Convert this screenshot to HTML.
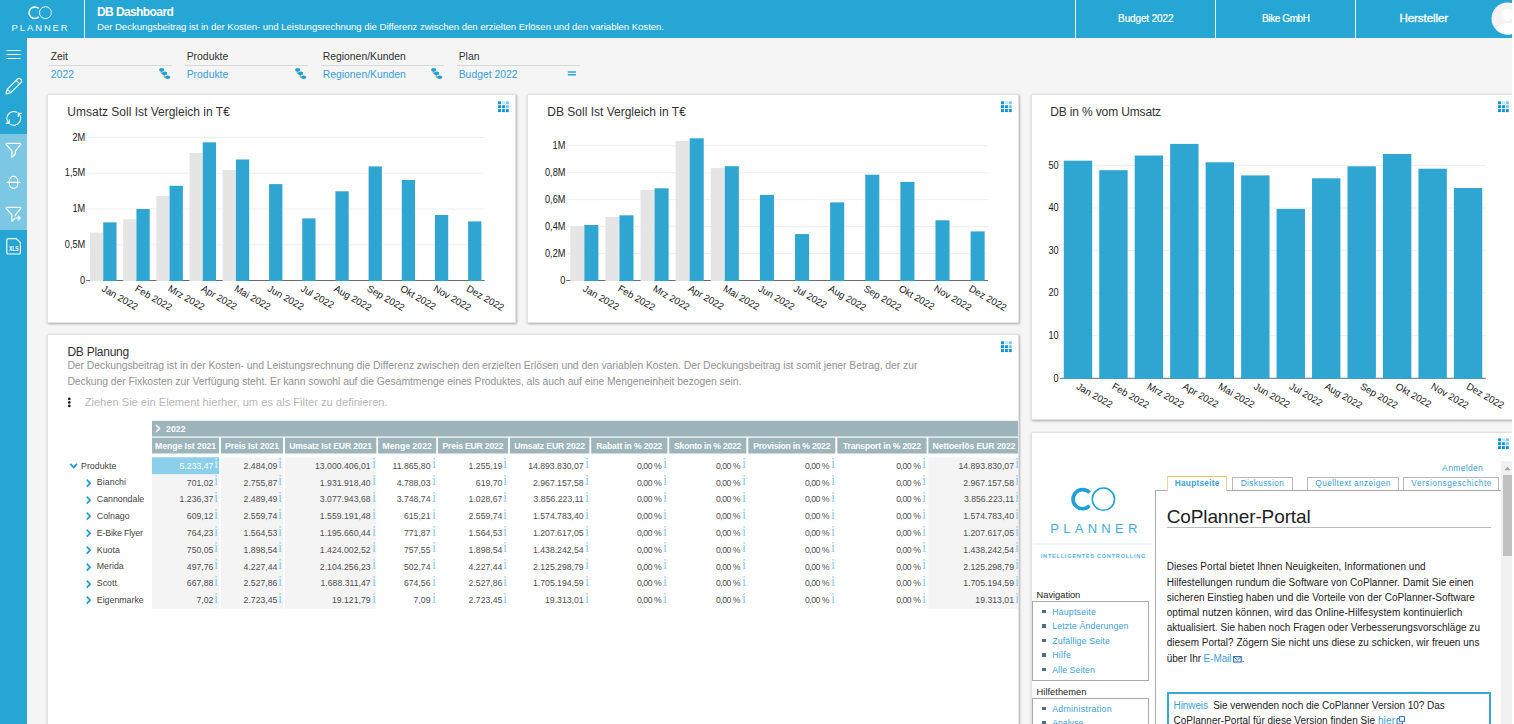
<!DOCTYPE html>
<html lang="de"><head><meta charset="utf-8"><title>DB Dashboard</title>
<style>
html,body{margin:0;padding:0;}
body{width:1514px;height:724px;overflow:hidden;background:#fff;position:relative;font-family:"Liberation Sans",sans-serif;color:#333;}
#app{position:absolute;left:0;top:0;width:1512px;height:724px;background:#f5f5f5;overflow:hidden;}
.abs{position:absolute;}
#hdr{position:absolute;left:0;top:0;width:1512px;height:38px;background:#25a6d4;color:#fff;}
#side{position:absolute;left:0;top:38px;width:27px;height:686px;background:#25a6d4;}
#side .lite{position:absolute;left:0;top:96px;width:27px;height:96px;background:#7cc8e4;}
.vdiv{position:absolute;top:0;width:1px;height:38px;background:#fff;opacity:.9;}
.hcell{position:absolute;top:0;height:38px;line-height:37px;text-align:center;font-size:10px;color:#fff;white-space:nowrap;}
.card{position:absolute;background:#fff;border:1px solid #e2e2e2;box-shadow:1px 1px 2px rgba(0,0,0,.22),0 1px 3px rgba(0,0,0,.10);box-sizing:border-box;}
.t{position:absolute;white-space:nowrap;line-height:1;}
.flab{font-size:10.5px;color:#333;}
.fval{font-size:10.5px;color:#3aa0d8;}
.fline{position:absolute;height:1px;background:#d9d9d9;}
svg{position:absolute;overflow:visible;}
svg text{font-family:"Liberation Sans",sans-serif;}
</style></head>
<body>
<div id="app">
<div id="hdr">
<svg style="left:0;top:0" width="84" height="38" viewBox="0 0 84 38"><path d="M38.7 8.4 A5.75 5.75 0 1 0 38.7 16.9" fill="none" stroke="#fff" stroke-width="1.5"/><circle cx="45.4" cy="12.65" r="5.95" fill="none" stroke="#fff" stroke-width="0.9"/></svg>
<div class="t " style="left:11.60px;top:23.04px;font-size:9.4px;line-height:9.4px;color:#fff;letter-spacing:1.951px;">PLANNER</div>
<div class="vdiv" style="left:84px"></div>
<div class="t " style="left:97.00px;top:6.14px;font-size:12px;line-height:12px;color:#fff;font-weight:bold;letter-spacing:-0.595px;">DB Dashboard</div>
<div class="t " style="left:97.00px;top:22.07px;font-size:9.6px;line-height:9.6px;color:#fff;letter-spacing:-0.043px;">Der Deckungsbeitrag ist in der Kosten- und Leistungsrechnung die Differenz zwischen den erzielten Erlösen und den variablen Kosten.</div>
<div class="vdiv" style="left:1075px"></div>
<div class="vdiv" style="left:1215px"></div>
<div class="vdiv" style="left:1355px"></div>
<div class="t " style="left:1118.10px;top:13.73px;font-size:10px;line-height:10px;color:#fff;letter-spacing:-0.132px;-webkit-text-stroke:0.2px #fff;">Budget 2022</div>
<div class="t " style="left:1262.05px;top:13.73px;font-size:10px;line-height:10px;color:#fff;letter-spacing:-0.403px;-webkit-text-stroke:0.2px #fff;">Bike GmbH</div>
<div class="t " style="left:1399.40px;top:12.97px;font-size:11.5px;line-height:11.5px;color:#fff;letter-spacing:-0.047px;-webkit-text-stroke:0.35px #fff;">Hersteller</div>
<svg style="left:1491px;top:2px" width="33" height="33" viewBox="0 0 33 33"><defs><clipPath id="avc"><circle cx="16.5" cy="16.5" r="16"/></clipPath></defs><circle cx="16.5" cy="16.5" r="16" fill="#f3f3f5"/><g clip-path="url(#avc)" fill="#fff"><circle cx="16.5" cy="13" r="6"/><ellipse cx="16.5" cy="30" rx="11.5" ry="9"/></g></svg>
</div>
<div id="side"><div class="lite"></div>
<svg style="left:0;top:0" width="27" height="240" viewBox="0 38 27 240" fill="none" stroke="#fff" stroke-width="1.15" stroke-linecap="round" stroke-linejoin="round"><path d="M6.5 50.5H20.5M6.5 54.5H20.5M6.5 58.5H20.5" stroke-linecap="butt"/><path d="M6 94L7.3 89.2L17.6 78.9a1.9 1.9 0 0 1 2.7 0l0.8 0.8a1.9 1.9 0 0 1 0 2.7L10.8 92.7Z M7.3 89.2L10.8 92.7 M16.2 80.3L19.7 83.8"/><path d="M8.75 123.1A6.9 6.9 0 0 1 16.8 112.2 M18.6 113.4A6.9 6.9 0 0 1 10.7 124.5"/><path d="M5.8 123.1H9.3V119.6 M21.6 113.4H18.3V116.9" stroke-linecap="butt" stroke-linejoin="miter"/><path d="M7 143.3H20a0.8 0.8 0 0 1 0.6 1.3L15.4 150.8V153.8L11.9 157.3V150.8L6.4 144.6a0.8 0.8 0 0 1 0.6 -1.3Z"/><rect x="9.4" y="176.4" width="8.3" height="12" rx="4.15"/><path d="M7.2 182.4H20"/><path d="M15.4 216V214.8L20.6 208.6a0.8 0.8 0 0 0 -0.6 -1.3H7a0.8 0.8 0 0 0 -0.6 1.3L11.9 214.8V221.3L14.9 218.3"/><path d="M15.8 218H19"/><path d="M18.5 215.9L20.9 218L18.5 220.1Z" fill="#fff" stroke-width="0.6"/><path d="M8.4 238.6H16.3L20.4 242.6V252.4a1.6 1.6 0 0 1 -1.6 1.6H8.4a1.6 1.6 0 0 1 -1.6 -1.6V240.2a1.6 1.6 0 0 1 1.6 -1.6Z"/><text x="13.7" y="251.4" font-size="6.4" font-weight="bold" fill="#fff" stroke="none" text-anchor="middle" textLength="9.6" lengthAdjust="spacingAndGlyphs">XLS</text></svg>
</div>
<div class="t " style="left:50.70px;top:52.00px;font-size:10.4px;line-height:10.4px;color:#333;letter-spacing:-0.043px;">Zeit</div>
<div class="fline" style="left:48.5px;top:65px;width:123.5px"></div>
<div class="t " style="left:50.70px;top:70.00px;font-size:10.4px;line-height:10.4px;color:#3aa0d8;letter-spacing:0.092px;">2022</div>
<svg style="left:158.5px;top:68.0px" width="12" height="12" viewBox="0 0 12 12"><path d="M2.2 2.5V5.5H4.5M5.2 6V9.3H7.5" stroke="#8a8a8a" stroke-width="0.9" fill="none"/><ellipse cx="2.7" cy="1.9" rx="2.6" ry="1.8" fill="#1d9fd8"/><ellipse cx="5.6" cy="5.4" rx="2.6" ry="1.8" fill="#1d9fd8"/><ellipse cx="8.7" cy="9.2" rx="2.6" ry="1.8" fill="#1d9fd8"/></svg>
<div class="t " style="left:186.70px;top:52.00px;font-size:10.4px;line-height:10.4px;color:#333;">Produkte</div>
<div class="fline" style="left:184.5px;top:65px;width:123.5px"></div>
<div class="t " style="left:186.70px;top:70.00px;font-size:10.4px;line-height:10.4px;color:#3aa0d8;">Produkte</div>
<svg style="left:294.5px;top:68.0px" width="12" height="12" viewBox="0 0 12 12"><path d="M2.2 2.5V5.5H4.5M5.2 6V9.3H7.5" stroke="#8a8a8a" stroke-width="0.9" fill="none"/><ellipse cx="2.7" cy="1.9" rx="2.6" ry="1.8" fill="#1d9fd8"/><ellipse cx="5.6" cy="5.4" rx="2.6" ry="1.8" fill="#1d9fd8"/><ellipse cx="8.7" cy="9.2" rx="2.6" ry="1.8" fill="#1d9fd8"/></svg>
<div class="t " style="left:322.70px;top:52.00px;font-size:10.4px;line-height:10.4px;color:#333;">Regionen/Kunden</div>
<div class="fline" style="left:320.5px;top:65px;width:123.5px"></div>
<div class="t " style="left:322.70px;top:70.00px;font-size:10.4px;line-height:10.4px;color:#3aa0d8;">Regionen/Kunden</div>
<svg style="left:430.5px;top:68.0px" width="12" height="12" viewBox="0 0 12 12"><path d="M2.2 2.5V5.5H4.5M5.2 6V9.3H7.5" stroke="#8a8a8a" stroke-width="0.9" fill="none"/><ellipse cx="2.7" cy="1.9" rx="2.6" ry="1.8" fill="#1d9fd8"/><ellipse cx="5.6" cy="5.4" rx="2.6" ry="1.8" fill="#1d9fd8"/><ellipse cx="8.7" cy="9.2" rx="2.6" ry="1.8" fill="#1d9fd8"/></svg>
<div class="t " style="left:458.70px;top:52.00px;font-size:10.4px;line-height:10.4px;color:#333;">Plan</div>
<div class="fline" style="left:456.5px;top:65px;width:123.5px"></div>
<div class="t " style="left:458.70px;top:70.00px;font-size:10.4px;line-height:10.4px;color:#3aa0d8;">Budget 2022</div>
<svg style="left:567px;top:70px" width="10" height="7" viewBox="0 0 10 7"><path d="M0.8 1.95H8.9M0.8 4.75H8.9" stroke="#2fa3d8" stroke-width="1.5" fill="none"/></svg>
<div class="card" style="left:47px;top:94px;width:468.8px;height:228.8px"></div>
<div class="t " style="left:67.30px;top:106.14px;font-size:12px;line-height:12px;color:#333;">Umsatz Soll Ist Vergleich in T€</div>
<svg style="left:0;top:0" width="1512" height="724" viewBox="0 0 1512 724"><path d="M86.68 137.50H484.68" stroke="#efefef" stroke-width="1"/><path d="M86.68 173.25H484.68" stroke="#efefef" stroke-width="1"/><path d="M86.68 209.00H484.68" stroke="#efefef" stroke-width="1"/><path d="M86.68 244.75H484.68" stroke="#efefef" stroke-width="1"/><path d="M86.18 280.50H484.68" stroke="#6b6b6b" stroke-width="1"/><rect x="90.00" y="232.60" width="13.27" height="48.40" fill="#e5e5e5"/><rect x="103.26" y="222.40" width="13.27" height="58.60" fill="#2fa6d1"/><rect x="123.16" y="219.20" width="13.27" height="61.80" fill="#e5e5e5"/><rect x="136.43" y="209.00" width="13.27" height="72.00" fill="#2fa6d1"/><rect x="156.33" y="196.10" width="13.27" height="84.90" fill="#e5e5e5"/><rect x="169.60" y="185.80" width="13.27" height="95.20" fill="#2fa6d1"/><rect x="189.50" y="153.00" width="13.27" height="128.00" fill="#e5e5e5"/><rect x="202.76" y="142.30" width="13.27" height="138.70" fill="#2fa6d1"/><rect x="222.66" y="170.00" width="13.27" height="111.00" fill="#e5e5e5"/><rect x="235.93" y="159.50" width="13.27" height="121.50" fill="#2fa6d1"/><rect x="269.10" y="184.10" width="13.27" height="96.90" fill="#2fa6d1"/><rect x="302.27" y="218.40" width="13.27" height="62.60" fill="#2fa6d1"/><rect x="335.43" y="191.30" width="13.27" height="89.70" fill="#2fa6d1"/><rect x="368.60" y="166.40" width="13.27" height="114.60" fill="#2fa6d1"/><rect x="401.77" y="180.00" width="13.27" height="101.00" fill="#2fa6d1"/><rect x="434.93" y="215.00" width="13.27" height="66.00" fill="#2fa6d1"/><rect x="468.10" y="221.40" width="13.27" height="59.60" fill="#2fa6d1"/><text transform="translate(85.20 140.70) scale(1 1.17)" font-size="9.2" fill="#1c1c1c" text-anchor="end">2M</text><text transform="translate(85.20 176.45) scale(1 1.17)" font-size="9.2" fill="#1c1c1c" text-anchor="end">1,5M</text><text transform="translate(85.20 212.20) scale(1 1.17)" font-size="9.2" fill="#1c1c1c" text-anchor="end">1M</text><text transform="translate(85.20 247.95) scale(1 1.17)" font-size="9.2" fill="#1c1c1c" text-anchor="end">0,5M</text><text transform="translate(85.20 283.70) scale(1 1.17)" font-size="9.2" fill="#1c1c1c" text-anchor="end">0</text><text transform="translate(100.96 290.50) rotate(30)" font-size="9.7" fill="#1c1c1c">Jan 2022</text><text transform="translate(134.13 290.50) rotate(30)" font-size="9.7" fill="#1c1c1c">Feb 2022</text><text transform="translate(167.30 290.50) rotate(30)" font-size="9.7" fill="#1c1c1c">Mrz 2022</text><text transform="translate(200.46 290.50) rotate(30)" font-size="9.7" fill="#1c1c1c">Apr 2022</text><text transform="translate(233.63 290.50) rotate(30)" font-size="9.7" fill="#1c1c1c">Mai 2022</text><text transform="translate(266.80 290.50) rotate(30)" font-size="9.7" fill="#1c1c1c">Jun 2022</text><text transform="translate(299.97 290.50) rotate(30)" font-size="9.7" fill="#1c1c1c">Jul 2022</text><text transform="translate(333.13 290.50) rotate(30)" font-size="9.7" fill="#1c1c1c">Aug 2022</text><text transform="translate(366.30 290.50) rotate(30)" font-size="9.7" fill="#1c1c1c">Sep 2022</text><text transform="translate(399.47 290.50) rotate(30)" font-size="9.7" fill="#1c1c1c">Okt 2022</text><text transform="translate(432.63 290.50) rotate(30)" font-size="9.7" fill="#1c1c1c">Nov 2022</text><text transform="translate(465.80 290.50) rotate(30)" font-size="9.7" fill="#1c1c1c">Dez 2022</text></svg>
<div class="card" style="left:527px;top:94px;width:491.5px;height:228.8px"></div>
<div class="t " style="left:547.30px;top:106.14px;font-size:12px;line-height:12px;color:#333;">DB Soll Ist Vergleich in T€</div>
<svg style="left:0;top:0" width="1512" height="724" viewBox="0 0 1512 724"><path d="M566.79 145.75H988.16" stroke="#efefef" stroke-width="1"/><path d="M566.79 172.70H988.16" stroke="#efefef" stroke-width="1"/><path d="M566.79 199.65H988.16" stroke="#efefef" stroke-width="1"/><path d="M566.79 226.60H988.16" stroke="#efefef" stroke-width="1"/><path d="M566.79 253.55H988.16" stroke="#efefef" stroke-width="1"/><path d="M566.29 280.50H988.16" stroke="#6b6b6b" stroke-width="1"/><rect x="570.30" y="226.40" width="14.05" height="54.60" fill="#e5e5e5"/><rect x="584.35" y="225.00" width="14.05" height="56.00" fill="#2fa6d1"/><rect x="605.42" y="217.00" width="14.05" height="64.00" fill="#e5e5e5"/><rect x="619.46" y="215.30" width="14.05" height="65.70" fill="#2fa6d1"/><rect x="640.53" y="189.90" width="14.05" height="91.10" fill="#e5e5e5"/><rect x="654.57" y="188.30" width="14.05" height="92.70" fill="#2fa6d1"/><rect x="675.64" y="141.00" width="14.05" height="140.00" fill="#e5e5e5"/><rect x="689.69" y="138.30" width="14.05" height="142.70" fill="#2fa6d1"/><rect x="710.76" y="168.10" width="14.05" height="112.90" fill="#e5e5e5"/><rect x="724.80" y="166.20" width="14.05" height="114.80" fill="#2fa6d1"/><rect x="759.92" y="194.90" width="14.05" height="86.10" fill="#2fa6d1"/><rect x="795.03" y="234.10" width="14.05" height="46.90" fill="#2fa6d1"/><rect x="830.14" y="202.40" width="14.05" height="78.60" fill="#2fa6d1"/><rect x="865.26" y="174.70" width="14.05" height="106.30" fill="#2fa6d1"/><rect x="900.37" y="181.90" width="14.05" height="99.10" fill="#2fa6d1"/><rect x="935.49" y="220.30" width="14.05" height="60.70" fill="#2fa6d1"/><rect x="970.60" y="231.40" width="14.05" height="49.60" fill="#2fa6d1"/><text transform="translate(565.40 148.95) scale(1 1.17)" font-size="9.2" fill="#1c1c1c" text-anchor="end">1M</text><text transform="translate(565.40 175.90) scale(1 1.17)" font-size="9.2" fill="#1c1c1c" text-anchor="end">0,8M</text><text transform="translate(565.40 202.85) scale(1 1.17)" font-size="9.2" fill="#1c1c1c" text-anchor="end">0,6M</text><text transform="translate(565.40 229.80) scale(1 1.17)" font-size="9.2" fill="#1c1c1c" text-anchor="end">0,4M</text><text transform="translate(565.40 256.75) scale(1 1.17)" font-size="9.2" fill="#1c1c1c" text-anchor="end">0,2M</text><text transform="translate(565.40 283.70) scale(1 1.17)" font-size="9.2" fill="#1c1c1c" text-anchor="end">0</text><text transform="translate(582.05 290.50) rotate(30)" font-size="9.7" fill="#1c1c1c">Jan 2022</text><text transform="translate(617.16 290.50) rotate(30)" font-size="9.7" fill="#1c1c1c">Feb 2022</text><text transform="translate(652.27 290.50) rotate(30)" font-size="9.7" fill="#1c1c1c">Mrz 2022</text><text transform="translate(687.39 290.50) rotate(30)" font-size="9.7" fill="#1c1c1c">Apr 2022</text><text transform="translate(722.50 290.50) rotate(30)" font-size="9.7" fill="#1c1c1c">Mai 2022</text><text transform="translate(757.62 290.50) rotate(30)" font-size="9.7" fill="#1c1c1c">Jun 2022</text><text transform="translate(792.73 290.50) rotate(30)" font-size="9.7" fill="#1c1c1c">Jul 2022</text><text transform="translate(827.85 290.50) rotate(30)" font-size="9.7" fill="#1c1c1c">Aug 2022</text><text transform="translate(862.96 290.50) rotate(30)" font-size="9.7" fill="#1c1c1c">Sep 2022</text><text transform="translate(898.07 290.50) rotate(30)" font-size="9.7" fill="#1c1c1c">Okt 2022</text><text transform="translate(933.19 290.50) rotate(30)" font-size="9.7" fill="#1c1c1c">Nov 2022</text><text transform="translate(968.30 290.50) rotate(30)" font-size="9.7" fill="#1c1c1c">Dez 2022</text></svg>
<div class="card" style="left:1031px;top:94px;width:500px;height:325.8px"></div>
<div class="t " style="left:1050.30px;top:106.14px;font-size:12px;line-height:12px;color:#333;letter-spacing:-0.151px;">DB in % vom Umsatz</div>
<svg style="left:0;top:0" width="1512" height="724" viewBox="0 0 1512 724"><path d="M1060.25 165.40H1485.82" stroke="#efefef" stroke-width="1"/><path d="M1060.25 208.00H1485.82" stroke="#efefef" stroke-width="1"/><path d="M1060.25 250.60H1485.82" stroke="#efefef" stroke-width="1"/><path d="M1060.25 293.10H1485.82" stroke="#efefef" stroke-width="1"/><path d="M1060.25 335.70H1485.82" stroke="#efefef" stroke-width="1"/><path d="M1059.75 378.30H1485.82" stroke="#6b6b6b" stroke-width="1"/><rect x="1063.80" y="160.70" width="28.37" height="218.10" fill="#2fa6d1"/><rect x="1099.26" y="170.20" width="28.37" height="208.60" fill="#2fa6d1"/><rect x="1134.72" y="155.50" width="28.37" height="223.30" fill="#2fa6d1"/><rect x="1170.19" y="143.90" width="28.37" height="234.90" fill="#2fa6d1"/><rect x="1205.65" y="162.30" width="28.37" height="216.50" fill="#2fa6d1"/><rect x="1241.12" y="175.40" width="28.37" height="203.40" fill="#2fa6d1"/><rect x="1276.58" y="208.90" width="28.37" height="169.90" fill="#2fa6d1"/><rect x="1312.04" y="178.30" width="28.37" height="200.50" fill="#2fa6d1"/><rect x="1347.51" y="166.30" width="28.37" height="212.50" fill="#2fa6d1"/><rect x="1382.97" y="154.00" width="28.37" height="224.80" fill="#2fa6d1"/><rect x="1418.44" y="168.70" width="28.37" height="210.10" fill="#2fa6d1"/><rect x="1453.90" y="188.00" width="28.37" height="190.80" fill="#2fa6d1"/><text transform="translate(1058.60 168.60) scale(1 1.17)" font-size="9.2" fill="#1c1c1c" text-anchor="end">50</text><text transform="translate(1058.60 211.20) scale(1 1.17)" font-size="9.2" fill="#1c1c1c" text-anchor="end">40</text><text transform="translate(1058.60 253.80) scale(1 1.17)" font-size="9.2" fill="#1c1c1c" text-anchor="end">30</text><text transform="translate(1058.60 296.30) scale(1 1.17)" font-size="9.2" fill="#1c1c1c" text-anchor="end">20</text><text transform="translate(1058.60 338.90) scale(1 1.17)" font-size="9.2" fill="#1c1c1c" text-anchor="end">10</text><text transform="translate(1058.60 381.50) scale(1 1.17)" font-size="9.2" fill="#1c1c1c" text-anchor="end">0</text><text transform="translate(1075.68 388.30) rotate(30)" font-size="9.7" fill="#1c1c1c">Jan 2022</text><text transform="translate(1111.15 388.30) rotate(30)" font-size="9.7" fill="#1c1c1c">Feb 2022</text><text transform="translate(1146.61 388.30) rotate(30)" font-size="9.7" fill="#1c1c1c">Mrz 2022</text><text transform="translate(1182.07 388.30) rotate(30)" font-size="9.7" fill="#1c1c1c">Apr 2022</text><text transform="translate(1217.54 388.30) rotate(30)" font-size="9.7" fill="#1c1c1c">Mai 2022</text><text transform="translate(1253.00 388.30) rotate(30)" font-size="9.7" fill="#1c1c1c">Jun 2022</text><text transform="translate(1288.47 388.30) rotate(30)" font-size="9.7" fill="#1c1c1c">Jul 2022</text><text transform="translate(1323.93 388.30) rotate(30)" font-size="9.7" fill="#1c1c1c">Aug 2022</text><text transform="translate(1359.39 388.30) rotate(30)" font-size="9.7" fill="#1c1c1c">Sep 2022</text><text transform="translate(1394.86 388.30) rotate(30)" font-size="9.7" fill="#1c1c1c">Okt 2022</text><text transform="translate(1430.32 388.30) rotate(30)" font-size="9.7" fill="#1c1c1c">Nov 2022</text><text transform="translate(1465.79 388.30) rotate(30)" font-size="9.7" fill="#1c1c1c">Dez 2022</text></svg>
<svg style="left:497.7px;top:100.8px" width="12" height="12" viewBox="0 0 12 12"><rect x="0.0" y="0.3" width="3" height="3" fill="#1493d6"/><rect x="3.9" y="0.3" width="3" height="3" fill="#bfe3fa"/><rect x="7.8" y="0.3" width="3" height="3" fill="#7cc6f4"/><rect x="0.0" y="4.2" width="3" height="3" fill="#1493d6"/><rect x="3.9" y="4.2" width="3" height="3" fill="#1493d6"/><rect x="7.8" y="4.2" width="3" height="3" fill="#7cc6f4"/><rect x="0.0" y="8.1" width="3" height="3" fill="#1493d6"/><rect x="3.9" y="8.1" width="3" height="3" fill="#1493d6"/><rect x="7.8" y="8.1" width="3" height="3" fill="#1493d6"/></svg>
<svg style="left:1000.5px;top:100.8px" width="12" height="12" viewBox="0 0 12 12"><rect x="0.0" y="0.3" width="3" height="3" fill="#1493d6"/><rect x="3.9" y="0.3" width="3" height="3" fill="#bfe3fa"/><rect x="7.8" y="0.3" width="3" height="3" fill="#7cc6f4"/><rect x="0.0" y="4.2" width="3" height="3" fill="#1493d6"/><rect x="3.9" y="4.2" width="3" height="3" fill="#1493d6"/><rect x="7.8" y="4.2" width="3" height="3" fill="#7cc6f4"/><rect x="0.0" y="8.1" width="3" height="3" fill="#1493d6"/><rect x="3.9" y="8.1" width="3" height="3" fill="#1493d6"/><rect x="7.8" y="8.1" width="3" height="3" fill="#1493d6"/></svg>
<svg style="left:1497.5px;top:100.8px" width="12" height="12" viewBox="0 0 12 12"><rect x="0.0" y="0.3" width="3" height="3" fill="#1493d6"/><rect x="3.9" y="0.3" width="3" height="3" fill="#bfe3fa"/><rect x="7.8" y="0.3" width="3" height="3" fill="#7cc6f4"/><rect x="0.0" y="4.2" width="3" height="3" fill="#1493d6"/><rect x="3.9" y="4.2" width="3" height="3" fill="#1493d6"/><rect x="7.8" y="4.2" width="3" height="3" fill="#7cc6f4"/><rect x="0.0" y="8.1" width="3" height="3" fill="#1493d6"/><rect x="3.9" y="8.1" width="3" height="3" fill="#1493d6"/><rect x="7.8" y="8.1" width="3" height="3" fill="#1493d6"/></svg>
<div class="card" style="left:47px;top:334px;width:972px;height:420px"></div>
<svg style="left:1000.5px;top:340.5px" width="12" height="12" viewBox="0 0 12 12"><rect x="0.0" y="0.3" width="3" height="3" fill="#1493d6"/><rect x="3.9" y="0.3" width="3" height="3" fill="#bfe3fa"/><rect x="7.8" y="0.3" width="3" height="3" fill="#7cc6f4"/><rect x="0.0" y="4.2" width="3" height="3" fill="#1493d6"/><rect x="3.9" y="4.2" width="3" height="3" fill="#1493d6"/><rect x="7.8" y="4.2" width="3" height="3" fill="#7cc6f4"/><rect x="0.0" y="8.1" width="3" height="3" fill="#1493d6"/><rect x="3.9" y="8.1" width="3" height="3" fill="#1493d6"/><rect x="7.8" y="8.1" width="3" height="3" fill="#1493d6"/></svg>
<div class="abs" style="left:0;top:0;width:1018px;height:724px;overflow:hidden">
<div class="t " style="left:67.40px;top:346.14px;font-size:12px;line-height:12px;color:#333;letter-spacing:-0.250px;">DB Planung</div>
<div class="t " style="left:67.40px;top:361.40px;font-size:10.4px;line-height:10.4px;color:#939393;letter-spacing:-0.051px;">Der Deckungsbeitrag ist in der Kosten- und Leistungsrechnung die Differenz zwischen den erzielten Erlösen und den variablen Kosten. Der Deckungsbeitrag ist somit jener Betrag, der zur</div>
<div class="t " style="left:67.40px;top:377.20px;font-size:10.4px;line-height:10.4px;color:#939393;letter-spacing:-0.055px;">Deckung der Fixkosten zur Verfügung steht. Er kann sowohl auf die Gesamtmenge eines Produktes, als auch auf eine Mengeneinheit bezogen sein.</div>
<svg style="left:67px;top:397px" width="5" height="11" viewBox="0 0 5 11"><circle cx="2.3" cy="1.9" r="1.35" fill="#222"/><circle cx="2.3" cy="5.4" r="1.35" fill="#222"/><circle cx="2.3" cy="8.9" r="1.35" fill="#222"/></svg>
<div class="t " style="left:84.70px;top:397.32px;font-size:11.2px;line-height:11.2px;color:#b7b7b7;letter-spacing:-0.038px;">Ziehen Sie ein Element hierher, um es als Filter zu definieren.</div>
<svg style="left:0;top:0" width="1018" height="724" viewBox="0 0 1018 724"><rect x="152" y="420.8" width="868" height="15.7" fill="#9db4bb"/><rect x="152.0" y="437.7" width="67.1" height="15.8" fill="#9db4bb"/><rect x="220.9" y="437.7" width="62.2" height="15.8" fill="#9db4bb"/><rect x="284.9" y="437.7" width="91.4" height="15.8" fill="#9db4bb"/><rect x="378.1" y="437.7" width="58.1" height="15.8" fill="#9db4bb"/><rect x="437.9" y="437.7" width="70.2" height="15.8" fill="#9db4bb"/><rect x="509.9" y="437.7" width="79.5" height="15.8" fill="#9db4bb"/><rect x="591.2" y="437.7" width="76.2" height="15.8" fill="#9db4bb"/><rect x="669.2" y="437.7" width="77.1" height="15.8" fill="#9db4bb"/><rect x="748.3" y="437.7" width="87.0" height="15.8" fill="#9db4bb"/><rect x="837.3" y="437.7" width="89.3" height="15.8" fill="#9db4bb"/><rect x="928.4" y="437.7" width="91.3" height="15.8" fill="#9db4bb"/><rect x="152.0" y="457.5" width="67.1" height="151.2" fill="#f4f4f4"/><rect x="220.9" y="457.5" width="62.2" height="151.2" fill="#f4f4f4"/><rect x="284.9" y="457.5" width="91.4" height="151.2" fill="#f4f4f4"/><rect x="928.4" y="457.5" width="91.3" height="151.2" fill="#f4f4f4"/><rect x="152.0" y="457.3" width="67.1" height="16.8" fill="#8bd0ea"/></svg>
<svg style="left:154.5px;top:424.3px" width="6" height="9" viewBox="0 0 6 9"><path d="M1 1L4.6 4.5L1 8" fill="none" stroke="#fff" stroke-width="1.5"/></svg>
<div class="t " style="left:166.10px;top:425.24px;font-size:8.7px;line-height:8.7px;color:#fff;font-weight:bold;letter-spacing:0.024px;">2022</div>
<div class="t " style="left:155.05px;top:441.62px;font-size:8.6px;line-height:8.6px;color:#fff;font-weight:bold;letter-spacing:-0.011px;">Menge Ist 2021</div>
<div class="t " style="left:225.05px;top:441.62px;font-size:8.6px;line-height:8.6px;color:#fff;font-weight:bold;letter-spacing:-0.081px;">Preis Ist 2021</div>
<div class="t " style="left:289.20px;top:441.62px;font-size:8.6px;line-height:8.6px;color:#fff;font-weight:bold;letter-spacing:-0.124px;">Umsatz Ist EUR 2021</div>
<div class="t " style="left:382.55px;top:441.62px;font-size:8.6px;line-height:8.6px;color:#fff;font-weight:bold;letter-spacing:0.052px;">Menge 2022</div>
<div class="t " style="left:442.55px;top:441.62px;font-size:8.6px;line-height:8.6px;color:#fff;font-weight:bold;letter-spacing:-0.166px;">Preis EUR 2022</div>
<div class="t " style="left:514.15px;top:441.62px;font-size:8.6px;line-height:8.6px;color:#fff;font-weight:bold;letter-spacing:-0.115px;">Umsatz EUR 2022</div>
<div class="t " style="left:596.25px;top:441.62px;font-size:8.6px;line-height:8.6px;color:#fff;font-weight:bold;letter-spacing:-0.146px;">Rabatt in % 2022</div>
<div class="t " style="left:674.10px;top:441.62px;font-size:8.6px;line-height:8.6px;color:#fff;font-weight:bold;letter-spacing:-0.226px;">Skonto in % 2022</div>
<div class="t " style="left:753.15px;top:441.62px;font-size:8.6px;line-height:8.6px;color:#fff;font-weight:bold;letter-spacing:-0.190px;">Provision in % 2022</div>
<div class="t " style="left:842.90px;top:441.62px;font-size:8.6px;line-height:8.6px;color:#fff;font-weight:bold;letter-spacing:-0.172px;">Transport in % 2022</div>
<div class="t " style="left:932.60px;top:441.62px;font-size:8.6px;line-height:8.6px;color:#fff;font-weight:bold;letter-spacing:-0.091px;">Nettoerlös EUR 2022</div>
<svg style="left:70px;top:463.1px" width="8" height="6" viewBox="0 0 8 6"><path d="M0.4 0.9L3.7 4.4L7 0.9" fill="none" stroke="#1e9ed6" stroke-width="1.7"/></svg>
<div class="t " style="left:81.00px;top:461.65px;font-size:8.8px;line-height:8.8px;color:#444;letter-spacing:0.026px;">Produkte</div>
<div class="t " style="left:179.57px;top:461.74px;font-size:8.7px;line-height:8.7px;color:#fff;">5.233,47</div>
<div class="t" style="left:212.4px;top:458.4px;font-size:14px;line-height:12px;color:#dff1f9;font-family:'Liberation Serif',serif;width:8px;text-align:center;transform:scaleX(.8);-webkit-text-stroke:0.2px #dff1f9">i</div>
<div class="t " style="left:243.57px;top:461.74px;font-size:8.7px;line-height:8.7px;color:#505050;">2.484,09</div>
<div class="t" style="left:276.4px;top:458.4px;font-size:14px;line-height:12px;color:#84cbe9;font-family:'Liberation Serif',serif;width:8px;text-align:center;transform:scaleX(.8);-webkit-text-stroke:0.2px #84cbe9">i</div>
<div class="t " style="left:315.04px;top:461.74px;font-size:8.7px;line-height:8.7px;color:#505050;">13.000.406,01</div>
<div class="t" style="left:369.6px;top:458.4px;font-size:14px;line-height:12px;color:#84cbe9;font-family:'Liberation Serif',serif;width:8px;text-align:center;transform:scaleX(.8);-webkit-text-stroke:0.2px #84cbe9">i</div>
<div class="t " style="left:392.48px;top:461.74px;font-size:8.7px;line-height:8.7px;color:#505050;">11.865,80</div>
<div class="t" style="left:429.5px;top:458.4px;font-size:14px;line-height:12px;color:#84cbe9;font-family:'Liberation Serif',serif;width:8px;text-align:center;transform:scaleX(.8);-webkit-text-stroke:0.2px #84cbe9">i</div>
<div class="t " style="left:468.57px;top:461.74px;font-size:8.7px;line-height:8.7px;color:#505050;">1.255,19</div>
<div class="t" style="left:501.4px;top:458.4px;font-size:14px;line-height:12px;color:#84cbe9;font-family:'Liberation Serif',serif;width:8px;text-align:center;transform:scaleX(.8);-webkit-text-stroke:0.2px #84cbe9">i</div>
<div class="t " style="left:528.14px;top:461.74px;font-size:8.7px;line-height:8.7px;color:#505050;">14.893.830,07</div>
<div class="t" style="left:582.7px;top:458.4px;font-size:14px;line-height:12px;color:#84cbe9;font-family:'Liberation Serif',serif;width:8px;text-align:center;transform:scaleX(.8);-webkit-text-stroke:0.2px #84cbe9">i</div>
<div class="t " style="left:637.00px;top:461.74px;font-size:8.7px;line-height:8.7px;color:#505050;letter-spacing:-0.469px;">0,00 %</div>
<div class="t" style="left:660.7px;top:458.4px;font-size:14px;line-height:12px;color:#84cbe9;font-family:'Liberation Serif',serif;width:8px;text-align:center;transform:scaleX(.8);-webkit-text-stroke:0.2px #84cbe9">i</div>
<div class="t " style="left:715.90px;top:461.74px;font-size:8.7px;line-height:8.7px;color:#505050;letter-spacing:-0.469px;">0,00 %</div>
<div class="t" style="left:739.6px;top:458.4px;font-size:14px;line-height:12px;color:#84cbe9;font-family:'Liberation Serif',serif;width:8px;text-align:center;transform:scaleX(.8);-webkit-text-stroke:0.2px #84cbe9">i</div>
<div class="t " style="left:804.90px;top:461.74px;font-size:8.7px;line-height:8.7px;color:#505050;letter-spacing:-0.469px;">0,00 %</div>
<div class="t" style="left:828.6px;top:458.4px;font-size:14px;line-height:12px;color:#84cbe9;font-family:'Liberation Serif',serif;width:8px;text-align:center;transform:scaleX(.8);-webkit-text-stroke:0.2px #84cbe9">i</div>
<div class="t " style="left:896.20px;top:461.74px;font-size:8.7px;line-height:8.7px;color:#505050;letter-spacing:-0.469px;">0,00 %</div>
<div class="t" style="left:919.9px;top:458.4px;font-size:14px;line-height:12px;color:#84cbe9;font-family:'Liberation Serif',serif;width:8px;text-align:center;transform:scaleX(.8);-webkit-text-stroke:0.2px #84cbe9">i</div>
<div class="t " style="left:958.44px;top:461.74px;font-size:8.7px;line-height:8.7px;color:#505050;">14.893.830,07</div>
<div class="t" style="left:1013.0px;top:458.4px;font-size:14px;line-height:12px;color:#84cbe9;font-family:'Liberation Serif',serif;width:8px;text-align:center;transform:scaleX(.8);-webkit-text-stroke:0.2px #84cbe9">i</div>
<svg style="left:86px;top:478.7px" width="6" height="9" viewBox="0 0 6 9"><path d="M0.8 0.7L4.1 4.2L0.8 7.7" fill="none" stroke="#1e9ed6" stroke-width="1.7"/></svg>
<div class="t " style="left:96.80px;top:478.45px;font-size:8.8px;line-height:8.8px;color:#444;letter-spacing:0.057px;">Bianchi</div>
<div class="t " style="left:186.82px;top:478.54px;font-size:8.7px;line-height:8.7px;color:#505050;">701,02</div>
<div class="t" style="left:212.4px;top:475.2px;font-size:14px;line-height:12px;color:#84cbe9;font-family:'Liberation Serif',serif;width:8px;text-align:center;transform:scaleX(.8);-webkit-text-stroke:0.2px #84cbe9">i</div>
<div class="t " style="left:243.57px;top:478.54px;font-size:8.7px;line-height:8.7px;color:#505050;">2.755,87</div>
<div class="t" style="left:276.4px;top:475.2px;font-size:14px;line-height:12px;color:#84cbe9;font-family:'Liberation Serif',serif;width:8px;text-align:center;transform:scaleX(.8);-webkit-text-stroke:0.2px #84cbe9">i</div>
<div class="t " style="left:319.87px;top:478.54px;font-size:8.7px;line-height:8.7px;color:#505050;">1.931.918,40</div>
<div class="t" style="left:369.6px;top:475.2px;font-size:14px;line-height:12px;color:#84cbe9;font-family:'Liberation Serif',serif;width:8px;text-align:center;transform:scaleX(.8);-webkit-text-stroke:0.2px #84cbe9">i</div>
<div class="t " style="left:396.67px;top:478.54px;font-size:8.7px;line-height:8.7px;color:#505050;">4.788,03</div>
<div class="t" style="left:429.5px;top:475.2px;font-size:14px;line-height:12px;color:#84cbe9;font-family:'Liberation Serif',serif;width:8px;text-align:center;transform:scaleX(.8);-webkit-text-stroke:0.2px #84cbe9">i</div>
<div class="t " style="left:475.82px;top:478.54px;font-size:8.7px;line-height:8.7px;color:#505050;">619,70</div>
<div class="t" style="left:501.4px;top:475.2px;font-size:14px;line-height:12px;color:#84cbe9;font-family:'Liberation Serif',serif;width:8px;text-align:center;transform:scaleX(.8);-webkit-text-stroke:0.2px #84cbe9">i</div>
<div class="t " style="left:532.97px;top:478.54px;font-size:8.7px;line-height:8.7px;color:#505050;">2.967.157,58</div>
<div class="t" style="left:582.7px;top:475.2px;font-size:14px;line-height:12px;color:#84cbe9;font-family:'Liberation Serif',serif;width:8px;text-align:center;transform:scaleX(.8);-webkit-text-stroke:0.2px #84cbe9">i</div>
<div class="t " style="left:637.00px;top:478.54px;font-size:8.7px;line-height:8.7px;color:#505050;letter-spacing:-0.469px;">0,00 %</div>
<div class="t" style="left:660.7px;top:475.2px;font-size:14px;line-height:12px;color:#84cbe9;font-family:'Liberation Serif',serif;width:8px;text-align:center;transform:scaleX(.8);-webkit-text-stroke:0.2px #84cbe9">i</div>
<div class="t " style="left:715.90px;top:478.54px;font-size:8.7px;line-height:8.7px;color:#505050;letter-spacing:-0.469px;">0,00 %</div>
<div class="t" style="left:739.6px;top:475.2px;font-size:14px;line-height:12px;color:#84cbe9;font-family:'Liberation Serif',serif;width:8px;text-align:center;transform:scaleX(.8);-webkit-text-stroke:0.2px #84cbe9">i</div>
<div class="t " style="left:804.90px;top:478.54px;font-size:8.7px;line-height:8.7px;color:#505050;letter-spacing:-0.469px;">0,00 %</div>
<div class="t" style="left:828.6px;top:475.2px;font-size:14px;line-height:12px;color:#84cbe9;font-family:'Liberation Serif',serif;width:8px;text-align:center;transform:scaleX(.8);-webkit-text-stroke:0.2px #84cbe9">i</div>
<div class="t " style="left:896.20px;top:478.54px;font-size:8.7px;line-height:8.7px;color:#505050;letter-spacing:-0.469px;">0,00 %</div>
<div class="t" style="left:919.9px;top:475.2px;font-size:14px;line-height:12px;color:#84cbe9;font-family:'Liberation Serif',serif;width:8px;text-align:center;transform:scaleX(.8);-webkit-text-stroke:0.2px #84cbe9">i</div>
<div class="t " style="left:963.27px;top:478.54px;font-size:8.7px;line-height:8.7px;color:#505050;">2.967.157,58</div>
<div class="t" style="left:1013.0px;top:475.2px;font-size:14px;line-height:12px;color:#84cbe9;font-family:'Liberation Serif',serif;width:8px;text-align:center;transform:scaleX(.8);-webkit-text-stroke:0.2px #84cbe9">i</div>
<svg style="left:86px;top:495.5px" width="6" height="9" viewBox="0 0 6 9"><path d="M0.8 0.7L4.1 4.2L0.8 7.7" fill="none" stroke="#1e9ed6" stroke-width="1.7"/></svg>
<div class="t " style="left:96.80px;top:495.25px;font-size:8.8px;line-height:8.8px;color:#444;">Cannondale</div>
<div class="t " style="left:179.57px;top:495.34px;font-size:8.7px;line-height:8.7px;color:#505050;">1.236,37</div>
<div class="t" style="left:212.4px;top:492.0px;font-size:14px;line-height:12px;color:#84cbe9;font-family:'Liberation Serif',serif;width:8px;text-align:center;transform:scaleX(.8);-webkit-text-stroke:0.2px #84cbe9">i</div>
<div class="t " style="left:243.57px;top:495.34px;font-size:8.7px;line-height:8.7px;color:#505050;">2.489,49</div>
<div class="t" style="left:276.4px;top:492.0px;font-size:14px;line-height:12px;color:#84cbe9;font-family:'Liberation Serif',serif;width:8px;text-align:center;transform:scaleX(.8);-webkit-text-stroke:0.2px #84cbe9">i</div>
<div class="t " style="left:319.87px;top:495.34px;font-size:8.7px;line-height:8.7px;color:#505050;">3.077.943,68</div>
<div class="t" style="left:369.6px;top:492.0px;font-size:14px;line-height:12px;color:#84cbe9;font-family:'Liberation Serif',serif;width:8px;text-align:center;transform:scaleX(.8);-webkit-text-stroke:0.2px #84cbe9">i</div>
<div class="t " style="left:396.67px;top:495.34px;font-size:8.7px;line-height:8.7px;color:#505050;">3.748,74</div>
<div class="t" style="left:429.5px;top:492.0px;font-size:14px;line-height:12px;color:#84cbe9;font-family:'Liberation Serif',serif;width:8px;text-align:center;transform:scaleX(.8);-webkit-text-stroke:0.2px #84cbe9">i</div>
<div class="t " style="left:468.57px;top:495.34px;font-size:8.7px;line-height:8.7px;color:#505050;">1.028,67</div>
<div class="t" style="left:501.4px;top:492.0px;font-size:14px;line-height:12px;color:#84cbe9;font-family:'Liberation Serif',serif;width:8px;text-align:center;transform:scaleX(.8);-webkit-text-stroke:0.2px #84cbe9">i</div>
<div class="t " style="left:533.61px;top:495.34px;font-size:8.7px;line-height:8.7px;color:#505050;">3.856.223,11</div>
<div class="t" style="left:582.7px;top:492.0px;font-size:14px;line-height:12px;color:#84cbe9;font-family:'Liberation Serif',serif;width:8px;text-align:center;transform:scaleX(.8);-webkit-text-stroke:0.2px #84cbe9">i</div>
<div class="t " style="left:637.00px;top:495.34px;font-size:8.7px;line-height:8.7px;color:#505050;letter-spacing:-0.469px;">0,00 %</div>
<div class="t" style="left:660.7px;top:492.0px;font-size:14px;line-height:12px;color:#84cbe9;font-family:'Liberation Serif',serif;width:8px;text-align:center;transform:scaleX(.8);-webkit-text-stroke:0.2px #84cbe9">i</div>
<div class="t " style="left:715.90px;top:495.34px;font-size:8.7px;line-height:8.7px;color:#505050;letter-spacing:-0.469px;">0,00 %</div>
<div class="t" style="left:739.6px;top:492.0px;font-size:14px;line-height:12px;color:#84cbe9;font-family:'Liberation Serif',serif;width:8px;text-align:center;transform:scaleX(.8);-webkit-text-stroke:0.2px #84cbe9">i</div>
<div class="t " style="left:804.90px;top:495.34px;font-size:8.7px;line-height:8.7px;color:#505050;letter-spacing:-0.469px;">0,00 %</div>
<div class="t" style="left:828.6px;top:492.0px;font-size:14px;line-height:12px;color:#84cbe9;font-family:'Liberation Serif',serif;width:8px;text-align:center;transform:scaleX(.8);-webkit-text-stroke:0.2px #84cbe9">i</div>
<div class="t " style="left:896.20px;top:495.34px;font-size:8.7px;line-height:8.7px;color:#505050;letter-spacing:-0.469px;">0,00 %</div>
<div class="t" style="left:919.9px;top:492.0px;font-size:14px;line-height:12px;color:#84cbe9;font-family:'Liberation Serif',serif;width:8px;text-align:center;transform:scaleX(.8);-webkit-text-stroke:0.2px #84cbe9">i</div>
<div class="t " style="left:963.91px;top:495.34px;font-size:8.7px;line-height:8.7px;color:#505050;">3.856.223,11</div>
<div class="t" style="left:1013.0px;top:492.0px;font-size:14px;line-height:12px;color:#84cbe9;font-family:'Liberation Serif',serif;width:8px;text-align:center;transform:scaleX(.8);-webkit-text-stroke:0.2px #84cbe9">i</div>
<svg style="left:86px;top:512.3px" width="6" height="9" viewBox="0 0 6 9"><path d="M0.8 0.7L4.1 4.2L0.8 7.7" fill="none" stroke="#1e9ed6" stroke-width="1.7"/></svg>
<div class="t " style="left:96.80px;top:512.05px;font-size:8.8px;line-height:8.8px;color:#444;letter-spacing:0.003px;">Colnago</div>
<div class="t " style="left:186.82px;top:512.14px;font-size:8.7px;line-height:8.7px;color:#505050;">609,12</div>
<div class="t" style="left:212.4px;top:508.8px;font-size:14px;line-height:12px;color:#84cbe9;font-family:'Liberation Serif',serif;width:8px;text-align:center;transform:scaleX(.8);-webkit-text-stroke:0.2px #84cbe9">i</div>
<div class="t " style="left:243.57px;top:512.14px;font-size:8.7px;line-height:8.7px;color:#505050;">2.559,74</div>
<div class="t" style="left:276.4px;top:508.8px;font-size:14px;line-height:12px;color:#84cbe9;font-family:'Liberation Serif',serif;width:8px;text-align:center;transform:scaleX(.8);-webkit-text-stroke:0.2px #84cbe9">i</div>
<div class="t " style="left:319.87px;top:512.14px;font-size:8.7px;line-height:8.7px;color:#505050;">1.559.191,48</div>
<div class="t" style="left:369.6px;top:508.8px;font-size:14px;line-height:12px;color:#84cbe9;font-family:'Liberation Serif',serif;width:8px;text-align:center;transform:scaleX(.8);-webkit-text-stroke:0.2px #84cbe9">i</div>
<div class="t " style="left:403.92px;top:512.14px;font-size:8.7px;line-height:8.7px;color:#505050;">615,21</div>
<div class="t" style="left:429.5px;top:508.8px;font-size:14px;line-height:12px;color:#84cbe9;font-family:'Liberation Serif',serif;width:8px;text-align:center;transform:scaleX(.8);-webkit-text-stroke:0.2px #84cbe9">i</div>
<div class="t " style="left:468.57px;top:512.14px;font-size:8.7px;line-height:8.7px;color:#505050;">2.559,74</div>
<div class="t" style="left:501.4px;top:508.8px;font-size:14px;line-height:12px;color:#84cbe9;font-family:'Liberation Serif',serif;width:8px;text-align:center;transform:scaleX(.8);-webkit-text-stroke:0.2px #84cbe9">i</div>
<div class="t " style="left:532.97px;top:512.14px;font-size:8.7px;line-height:8.7px;color:#505050;">1.574.783,40</div>
<div class="t" style="left:582.7px;top:508.8px;font-size:14px;line-height:12px;color:#84cbe9;font-family:'Liberation Serif',serif;width:8px;text-align:center;transform:scaleX(.8);-webkit-text-stroke:0.2px #84cbe9">i</div>
<div class="t " style="left:637.00px;top:512.14px;font-size:8.7px;line-height:8.7px;color:#505050;letter-spacing:-0.469px;">0,00 %</div>
<div class="t" style="left:660.7px;top:508.8px;font-size:14px;line-height:12px;color:#84cbe9;font-family:'Liberation Serif',serif;width:8px;text-align:center;transform:scaleX(.8);-webkit-text-stroke:0.2px #84cbe9">i</div>
<div class="t " style="left:715.90px;top:512.14px;font-size:8.7px;line-height:8.7px;color:#505050;letter-spacing:-0.469px;">0,00 %</div>
<div class="t" style="left:739.6px;top:508.8px;font-size:14px;line-height:12px;color:#84cbe9;font-family:'Liberation Serif',serif;width:8px;text-align:center;transform:scaleX(.8);-webkit-text-stroke:0.2px #84cbe9">i</div>
<div class="t " style="left:804.90px;top:512.14px;font-size:8.7px;line-height:8.7px;color:#505050;letter-spacing:-0.469px;">0,00 %</div>
<div class="t" style="left:828.6px;top:508.8px;font-size:14px;line-height:12px;color:#84cbe9;font-family:'Liberation Serif',serif;width:8px;text-align:center;transform:scaleX(.8);-webkit-text-stroke:0.2px #84cbe9">i</div>
<div class="t " style="left:896.20px;top:512.14px;font-size:8.7px;line-height:8.7px;color:#505050;letter-spacing:-0.469px;">0,00 %</div>
<div class="t" style="left:919.9px;top:508.8px;font-size:14px;line-height:12px;color:#84cbe9;font-family:'Liberation Serif',serif;width:8px;text-align:center;transform:scaleX(.8);-webkit-text-stroke:0.2px #84cbe9">i</div>
<div class="t " style="left:963.27px;top:512.14px;font-size:8.7px;line-height:8.7px;color:#505050;">1.574.783,40</div>
<div class="t" style="left:1013.0px;top:508.8px;font-size:14px;line-height:12px;color:#84cbe9;font-family:'Liberation Serif',serif;width:8px;text-align:center;transform:scaleX(.8);-webkit-text-stroke:0.2px #84cbe9">i</div>
<svg style="left:86px;top:529.1px" width="6" height="9" viewBox="0 0 6 9"><path d="M0.8 0.7L4.1 4.2L0.8 7.7" fill="none" stroke="#1e9ed6" stroke-width="1.7"/></svg>
<div class="t " style="left:96.80px;top:528.85px;font-size:8.8px;line-height:8.8px;color:#444;letter-spacing:-0.155px;">E-Bike Flyer</div>
<div class="t " style="left:186.82px;top:528.94px;font-size:8.7px;line-height:8.7px;color:#505050;">764,23</div>
<div class="t" style="left:212.4px;top:525.6px;font-size:14px;line-height:12px;color:#84cbe9;font-family:'Liberation Serif',serif;width:8px;text-align:center;transform:scaleX(.8);-webkit-text-stroke:0.2px #84cbe9">i</div>
<div class="t " style="left:243.57px;top:528.94px;font-size:8.7px;line-height:8.7px;color:#505050;">1.564,53</div>
<div class="t" style="left:276.4px;top:525.6px;font-size:14px;line-height:12px;color:#84cbe9;font-family:'Liberation Serif',serif;width:8px;text-align:center;transform:scaleX(.8);-webkit-text-stroke:0.2px #84cbe9">i</div>
<div class="t " style="left:319.87px;top:528.94px;font-size:8.7px;line-height:8.7px;color:#505050;">1.195.660,44</div>
<div class="t" style="left:369.6px;top:525.6px;font-size:14px;line-height:12px;color:#84cbe9;font-family:'Liberation Serif',serif;width:8px;text-align:center;transform:scaleX(.8);-webkit-text-stroke:0.2px #84cbe9">i</div>
<div class="t " style="left:403.92px;top:528.94px;font-size:8.7px;line-height:8.7px;color:#505050;">771,87</div>
<div class="t" style="left:429.5px;top:525.6px;font-size:14px;line-height:12px;color:#84cbe9;font-family:'Liberation Serif',serif;width:8px;text-align:center;transform:scaleX(.8);-webkit-text-stroke:0.2px #84cbe9">i</div>
<div class="t " style="left:468.57px;top:528.94px;font-size:8.7px;line-height:8.7px;color:#505050;">1.564,53</div>
<div class="t" style="left:501.4px;top:525.6px;font-size:14px;line-height:12px;color:#84cbe9;font-family:'Liberation Serif',serif;width:8px;text-align:center;transform:scaleX(.8);-webkit-text-stroke:0.2px #84cbe9">i</div>
<div class="t " style="left:532.97px;top:528.94px;font-size:8.7px;line-height:8.7px;color:#505050;">1.207.617,05</div>
<div class="t" style="left:582.7px;top:525.6px;font-size:14px;line-height:12px;color:#84cbe9;font-family:'Liberation Serif',serif;width:8px;text-align:center;transform:scaleX(.8);-webkit-text-stroke:0.2px #84cbe9">i</div>
<div class="t " style="left:637.00px;top:528.94px;font-size:8.7px;line-height:8.7px;color:#505050;letter-spacing:-0.469px;">0,00 %</div>
<div class="t" style="left:660.7px;top:525.6px;font-size:14px;line-height:12px;color:#84cbe9;font-family:'Liberation Serif',serif;width:8px;text-align:center;transform:scaleX(.8);-webkit-text-stroke:0.2px #84cbe9">i</div>
<div class="t " style="left:715.90px;top:528.94px;font-size:8.7px;line-height:8.7px;color:#505050;letter-spacing:-0.469px;">0,00 %</div>
<div class="t" style="left:739.6px;top:525.6px;font-size:14px;line-height:12px;color:#84cbe9;font-family:'Liberation Serif',serif;width:8px;text-align:center;transform:scaleX(.8);-webkit-text-stroke:0.2px #84cbe9">i</div>
<div class="t " style="left:804.90px;top:528.94px;font-size:8.7px;line-height:8.7px;color:#505050;letter-spacing:-0.469px;">0,00 %</div>
<div class="t" style="left:828.6px;top:525.6px;font-size:14px;line-height:12px;color:#84cbe9;font-family:'Liberation Serif',serif;width:8px;text-align:center;transform:scaleX(.8);-webkit-text-stroke:0.2px #84cbe9">i</div>
<div class="t " style="left:896.20px;top:528.94px;font-size:8.7px;line-height:8.7px;color:#505050;letter-spacing:-0.469px;">0,00 %</div>
<div class="t" style="left:919.9px;top:525.6px;font-size:14px;line-height:12px;color:#84cbe9;font-family:'Liberation Serif',serif;width:8px;text-align:center;transform:scaleX(.8);-webkit-text-stroke:0.2px #84cbe9">i</div>
<div class="t " style="left:963.27px;top:528.94px;font-size:8.7px;line-height:8.7px;color:#505050;">1.207.617,05</div>
<div class="t" style="left:1013.0px;top:525.6px;font-size:14px;line-height:12px;color:#84cbe9;font-family:'Liberation Serif',serif;width:8px;text-align:center;transform:scaleX(.8);-webkit-text-stroke:0.2px #84cbe9">i</div>
<svg style="left:86px;top:545.9px" width="6" height="9" viewBox="0 0 6 9"><path d="M0.8 0.7L4.1 4.2L0.8 7.7" fill="none" stroke="#1e9ed6" stroke-width="1.7"/></svg>
<div class="t " style="left:96.80px;top:545.65px;font-size:8.8px;line-height:8.8px;color:#444;">Kuota</div>
<div class="t " style="left:186.82px;top:545.74px;font-size:8.7px;line-height:8.7px;color:#505050;">750,05</div>
<div class="t" style="left:212.4px;top:542.4px;font-size:14px;line-height:12px;color:#84cbe9;font-family:'Liberation Serif',serif;width:8px;text-align:center;transform:scaleX(.8);-webkit-text-stroke:0.2px #84cbe9">i</div>
<div class="t " style="left:243.57px;top:545.74px;font-size:8.7px;line-height:8.7px;color:#505050;">1.898,54</div>
<div class="t" style="left:276.4px;top:542.4px;font-size:14px;line-height:12px;color:#84cbe9;font-family:'Liberation Serif',serif;width:8px;text-align:center;transform:scaleX(.8);-webkit-text-stroke:0.2px #84cbe9">i</div>
<div class="t " style="left:319.87px;top:545.74px;font-size:8.7px;line-height:8.7px;color:#505050;">1.424.002,52</div>
<div class="t" style="left:369.6px;top:542.4px;font-size:14px;line-height:12px;color:#84cbe9;font-family:'Liberation Serif',serif;width:8px;text-align:center;transform:scaleX(.8);-webkit-text-stroke:0.2px #84cbe9">i</div>
<div class="t " style="left:403.92px;top:545.74px;font-size:8.7px;line-height:8.7px;color:#505050;">757,55</div>
<div class="t" style="left:429.5px;top:542.4px;font-size:14px;line-height:12px;color:#84cbe9;font-family:'Liberation Serif',serif;width:8px;text-align:center;transform:scaleX(.8);-webkit-text-stroke:0.2px #84cbe9">i</div>
<div class="t " style="left:468.57px;top:545.74px;font-size:8.7px;line-height:8.7px;color:#505050;">1.898,54</div>
<div class="t" style="left:501.4px;top:542.4px;font-size:14px;line-height:12px;color:#84cbe9;font-family:'Liberation Serif',serif;width:8px;text-align:center;transform:scaleX(.8);-webkit-text-stroke:0.2px #84cbe9">i</div>
<div class="t " style="left:532.97px;top:545.74px;font-size:8.7px;line-height:8.7px;color:#505050;">1.438.242,54</div>
<div class="t" style="left:582.7px;top:542.4px;font-size:14px;line-height:12px;color:#84cbe9;font-family:'Liberation Serif',serif;width:8px;text-align:center;transform:scaleX(.8);-webkit-text-stroke:0.2px #84cbe9">i</div>
<div class="t " style="left:637.00px;top:545.74px;font-size:8.7px;line-height:8.7px;color:#505050;letter-spacing:-0.469px;">0,00 %</div>
<div class="t" style="left:660.7px;top:542.4px;font-size:14px;line-height:12px;color:#84cbe9;font-family:'Liberation Serif',serif;width:8px;text-align:center;transform:scaleX(.8);-webkit-text-stroke:0.2px #84cbe9">i</div>
<div class="t " style="left:715.90px;top:545.74px;font-size:8.7px;line-height:8.7px;color:#505050;letter-spacing:-0.469px;">0,00 %</div>
<div class="t" style="left:739.6px;top:542.4px;font-size:14px;line-height:12px;color:#84cbe9;font-family:'Liberation Serif',serif;width:8px;text-align:center;transform:scaleX(.8);-webkit-text-stroke:0.2px #84cbe9">i</div>
<div class="t " style="left:804.90px;top:545.74px;font-size:8.7px;line-height:8.7px;color:#505050;letter-spacing:-0.469px;">0,00 %</div>
<div class="t" style="left:828.6px;top:542.4px;font-size:14px;line-height:12px;color:#84cbe9;font-family:'Liberation Serif',serif;width:8px;text-align:center;transform:scaleX(.8);-webkit-text-stroke:0.2px #84cbe9">i</div>
<div class="t " style="left:896.20px;top:545.74px;font-size:8.7px;line-height:8.7px;color:#505050;letter-spacing:-0.469px;">0,00 %</div>
<div class="t" style="left:919.9px;top:542.4px;font-size:14px;line-height:12px;color:#84cbe9;font-family:'Liberation Serif',serif;width:8px;text-align:center;transform:scaleX(.8);-webkit-text-stroke:0.2px #84cbe9">i</div>
<div class="t " style="left:963.27px;top:545.74px;font-size:8.7px;line-height:8.7px;color:#505050;">1.438.242,54</div>
<div class="t" style="left:1013.0px;top:542.4px;font-size:14px;line-height:12px;color:#84cbe9;font-family:'Liberation Serif',serif;width:8px;text-align:center;transform:scaleX(.8);-webkit-text-stroke:0.2px #84cbe9">i</div>
<svg style="left:86px;top:562.7px" width="6" height="9" viewBox="0 0 6 9"><path d="M0.8 0.7L4.1 4.2L0.8 7.7" fill="none" stroke="#1e9ed6" stroke-width="1.7"/></svg>
<div class="t " style="left:96.80px;top:562.45px;font-size:8.8px;line-height:8.8px;color:#444;">Merida</div>
<div class="t " style="left:186.82px;top:562.54px;font-size:8.7px;line-height:8.7px;color:#505050;">497,76</div>
<div class="t" style="left:212.4px;top:559.2px;font-size:14px;line-height:12px;color:#84cbe9;font-family:'Liberation Serif',serif;width:8px;text-align:center;transform:scaleX(.8);-webkit-text-stroke:0.2px #84cbe9">i</div>
<div class="t " style="left:243.57px;top:562.54px;font-size:8.7px;line-height:8.7px;color:#505050;">4.227,44</div>
<div class="t" style="left:276.4px;top:559.2px;font-size:14px;line-height:12px;color:#84cbe9;font-family:'Liberation Serif',serif;width:8px;text-align:center;transform:scaleX(.8);-webkit-text-stroke:0.2px #84cbe9">i</div>
<div class="t " style="left:319.87px;top:562.54px;font-size:8.7px;line-height:8.7px;color:#505050;">2.104.256,23</div>
<div class="t" style="left:369.6px;top:559.2px;font-size:14px;line-height:12px;color:#84cbe9;font-family:'Liberation Serif',serif;width:8px;text-align:center;transform:scaleX(.8);-webkit-text-stroke:0.2px #84cbe9">i</div>
<div class="t " style="left:403.92px;top:562.54px;font-size:8.7px;line-height:8.7px;color:#505050;">502,74</div>
<div class="t" style="left:429.5px;top:559.2px;font-size:14px;line-height:12px;color:#84cbe9;font-family:'Liberation Serif',serif;width:8px;text-align:center;transform:scaleX(.8);-webkit-text-stroke:0.2px #84cbe9">i</div>
<div class="t " style="left:468.57px;top:562.54px;font-size:8.7px;line-height:8.7px;color:#505050;">4.227,44</div>
<div class="t" style="left:501.4px;top:559.2px;font-size:14px;line-height:12px;color:#84cbe9;font-family:'Liberation Serif',serif;width:8px;text-align:center;transform:scaleX(.8);-webkit-text-stroke:0.2px #84cbe9">i</div>
<div class="t " style="left:532.97px;top:562.54px;font-size:8.7px;line-height:8.7px;color:#505050;">2.125.298,79</div>
<div class="t" style="left:582.7px;top:559.2px;font-size:14px;line-height:12px;color:#84cbe9;font-family:'Liberation Serif',serif;width:8px;text-align:center;transform:scaleX(.8);-webkit-text-stroke:0.2px #84cbe9">i</div>
<div class="t " style="left:637.00px;top:562.54px;font-size:8.7px;line-height:8.7px;color:#505050;letter-spacing:-0.469px;">0,00 %</div>
<div class="t" style="left:660.7px;top:559.2px;font-size:14px;line-height:12px;color:#84cbe9;font-family:'Liberation Serif',serif;width:8px;text-align:center;transform:scaleX(.8);-webkit-text-stroke:0.2px #84cbe9">i</div>
<div class="t " style="left:715.90px;top:562.54px;font-size:8.7px;line-height:8.7px;color:#505050;letter-spacing:-0.469px;">0,00 %</div>
<div class="t" style="left:739.6px;top:559.2px;font-size:14px;line-height:12px;color:#84cbe9;font-family:'Liberation Serif',serif;width:8px;text-align:center;transform:scaleX(.8);-webkit-text-stroke:0.2px #84cbe9">i</div>
<div class="t " style="left:804.90px;top:562.54px;font-size:8.7px;line-height:8.7px;color:#505050;letter-spacing:-0.469px;">0,00 %</div>
<div class="t" style="left:828.6px;top:559.2px;font-size:14px;line-height:12px;color:#84cbe9;font-family:'Liberation Serif',serif;width:8px;text-align:center;transform:scaleX(.8);-webkit-text-stroke:0.2px #84cbe9">i</div>
<div class="t " style="left:896.20px;top:562.54px;font-size:8.7px;line-height:8.7px;color:#505050;letter-spacing:-0.469px;">0,00 %</div>
<div class="t" style="left:919.9px;top:559.2px;font-size:14px;line-height:12px;color:#84cbe9;font-family:'Liberation Serif',serif;width:8px;text-align:center;transform:scaleX(.8);-webkit-text-stroke:0.2px #84cbe9">i</div>
<div class="t " style="left:963.27px;top:562.54px;font-size:8.7px;line-height:8.7px;color:#505050;">2.125.298,79</div>
<div class="t" style="left:1013.0px;top:559.2px;font-size:14px;line-height:12px;color:#84cbe9;font-family:'Liberation Serif',serif;width:8px;text-align:center;transform:scaleX(.8);-webkit-text-stroke:0.2px #84cbe9">i</div>
<svg style="left:86px;top:579.5px" width="6" height="9" viewBox="0 0 6 9"><path d="M0.8 0.7L4.1 4.2L0.8 7.7" fill="none" stroke="#1e9ed6" stroke-width="1.7"/></svg>
<div class="t " style="left:96.80px;top:579.25px;font-size:8.8px;line-height:8.8px;color:#444;">Scott</div>
<div class="t " style="left:186.82px;top:579.34px;font-size:8.7px;line-height:8.7px;color:#505050;">667,88</div>
<div class="t" style="left:212.4px;top:576.0px;font-size:14px;line-height:12px;color:#84cbe9;font-family:'Liberation Serif',serif;width:8px;text-align:center;transform:scaleX(.8);-webkit-text-stroke:0.2px #84cbe9">i</div>
<div class="t " style="left:243.57px;top:579.34px;font-size:8.7px;line-height:8.7px;color:#505050;">2.527,86</div>
<div class="t" style="left:276.4px;top:576.0px;font-size:14px;line-height:12px;color:#84cbe9;font-family:'Liberation Serif',serif;width:8px;text-align:center;transform:scaleX(.8);-webkit-text-stroke:0.2px #84cbe9">i</div>
<div class="t " style="left:320.51px;top:579.34px;font-size:8.7px;line-height:8.7px;color:#505050;">1.688.311,47</div>
<div class="t" style="left:369.6px;top:576.0px;font-size:14px;line-height:12px;color:#84cbe9;font-family:'Liberation Serif',serif;width:8px;text-align:center;transform:scaleX(.8);-webkit-text-stroke:0.2px #84cbe9">i</div>
<div class="t " style="left:403.92px;top:579.34px;font-size:8.7px;line-height:8.7px;color:#505050;">674,56</div>
<div class="t" style="left:429.5px;top:576.0px;font-size:14px;line-height:12px;color:#84cbe9;font-family:'Liberation Serif',serif;width:8px;text-align:center;transform:scaleX(.8);-webkit-text-stroke:0.2px #84cbe9">i</div>
<div class="t " style="left:468.57px;top:579.34px;font-size:8.7px;line-height:8.7px;color:#505050;">2.527,86</div>
<div class="t" style="left:501.4px;top:576.0px;font-size:14px;line-height:12px;color:#84cbe9;font-family:'Liberation Serif',serif;width:8px;text-align:center;transform:scaleX(.8);-webkit-text-stroke:0.2px #84cbe9">i</div>
<div class="t " style="left:532.97px;top:579.34px;font-size:8.7px;line-height:8.7px;color:#505050;">1.705.194,59</div>
<div class="t" style="left:582.7px;top:576.0px;font-size:14px;line-height:12px;color:#84cbe9;font-family:'Liberation Serif',serif;width:8px;text-align:center;transform:scaleX(.8);-webkit-text-stroke:0.2px #84cbe9">i</div>
<div class="t " style="left:637.00px;top:579.34px;font-size:8.7px;line-height:8.7px;color:#505050;letter-spacing:-0.469px;">0,00 %</div>
<div class="t" style="left:660.7px;top:576.0px;font-size:14px;line-height:12px;color:#84cbe9;font-family:'Liberation Serif',serif;width:8px;text-align:center;transform:scaleX(.8);-webkit-text-stroke:0.2px #84cbe9">i</div>
<div class="t " style="left:715.90px;top:579.34px;font-size:8.7px;line-height:8.7px;color:#505050;letter-spacing:-0.469px;">0,00 %</div>
<div class="t" style="left:739.6px;top:576.0px;font-size:14px;line-height:12px;color:#84cbe9;font-family:'Liberation Serif',serif;width:8px;text-align:center;transform:scaleX(.8);-webkit-text-stroke:0.2px #84cbe9">i</div>
<div class="t " style="left:804.90px;top:579.34px;font-size:8.7px;line-height:8.7px;color:#505050;letter-spacing:-0.469px;">0,00 %</div>
<div class="t" style="left:828.6px;top:576.0px;font-size:14px;line-height:12px;color:#84cbe9;font-family:'Liberation Serif',serif;width:8px;text-align:center;transform:scaleX(.8);-webkit-text-stroke:0.2px #84cbe9">i</div>
<div class="t " style="left:896.20px;top:579.34px;font-size:8.7px;line-height:8.7px;color:#505050;letter-spacing:-0.469px;">0,00 %</div>
<div class="t" style="left:919.9px;top:576.0px;font-size:14px;line-height:12px;color:#84cbe9;font-family:'Liberation Serif',serif;width:8px;text-align:center;transform:scaleX(.8);-webkit-text-stroke:0.2px #84cbe9">i</div>
<div class="t " style="left:963.27px;top:579.34px;font-size:8.7px;line-height:8.7px;color:#505050;">1.705.194,59</div>
<div class="t" style="left:1013.0px;top:576.0px;font-size:14px;line-height:12px;color:#84cbe9;font-family:'Liberation Serif',serif;width:8px;text-align:center;transform:scaleX(.8);-webkit-text-stroke:0.2px #84cbe9">i</div>
<svg style="left:86px;top:596.3px" width="6" height="9" viewBox="0 0 6 9"><path d="M0.8 0.7L4.1 4.2L0.8 7.7" fill="none" stroke="#1e9ed6" stroke-width="1.7"/></svg>
<div class="t " style="left:96.80px;top:596.05px;font-size:8.8px;line-height:8.8px;color:#444;">Eigenmarke</div>
<div class="t " style="left:196.48px;top:596.14px;font-size:8.7px;line-height:8.7px;color:#505050;">7,02</div>
<div class="t" style="left:212.4px;top:592.8px;font-size:14px;line-height:12px;color:#84cbe9;font-family:'Liberation Serif',serif;width:8px;text-align:center;transform:scaleX(.8);-webkit-text-stroke:0.2px #84cbe9">i</div>
<div class="t " style="left:243.57px;top:596.14px;font-size:8.7px;line-height:8.7px;color:#505050;">2.723,45</div>
<div class="t" style="left:276.4px;top:592.8px;font-size:14px;line-height:12px;color:#84cbe9;font-family:'Liberation Serif',serif;width:8px;text-align:center;transform:scaleX(.8);-webkit-text-stroke:0.2px #84cbe9">i</div>
<div class="t " style="left:331.94px;top:596.14px;font-size:8.7px;line-height:8.7px;color:#505050;">19.121,79</div>
<div class="t" style="left:369.6px;top:592.8px;font-size:14px;line-height:12px;color:#84cbe9;font-family:'Liberation Serif',serif;width:8px;text-align:center;transform:scaleX(.8);-webkit-text-stroke:0.2px #84cbe9">i</div>
<div class="t " style="left:413.58px;top:596.14px;font-size:8.7px;line-height:8.7px;color:#505050;">7,09</div>
<div class="t" style="left:429.5px;top:592.8px;font-size:14px;line-height:12px;color:#84cbe9;font-family:'Liberation Serif',serif;width:8px;text-align:center;transform:scaleX(.8);-webkit-text-stroke:0.2px #84cbe9">i</div>
<div class="t " style="left:468.57px;top:596.14px;font-size:8.7px;line-height:8.7px;color:#505050;">2.723,45</div>
<div class="t" style="left:501.4px;top:592.8px;font-size:14px;line-height:12px;color:#84cbe9;font-family:'Liberation Serif',serif;width:8px;text-align:center;transform:scaleX(.8);-webkit-text-stroke:0.2px #84cbe9">i</div>
<div class="t " style="left:545.04px;top:596.14px;font-size:8.7px;line-height:8.7px;color:#505050;">19.313,01</div>
<div class="t" style="left:582.7px;top:592.8px;font-size:14px;line-height:12px;color:#84cbe9;font-family:'Liberation Serif',serif;width:8px;text-align:center;transform:scaleX(.8);-webkit-text-stroke:0.2px #84cbe9">i</div>
<div class="t " style="left:637.00px;top:596.14px;font-size:8.7px;line-height:8.7px;color:#505050;letter-spacing:-0.469px;">0,00 %</div>
<div class="t" style="left:660.7px;top:592.8px;font-size:14px;line-height:12px;color:#84cbe9;font-family:'Liberation Serif',serif;width:8px;text-align:center;transform:scaleX(.8);-webkit-text-stroke:0.2px #84cbe9">i</div>
<div class="t " style="left:715.90px;top:596.14px;font-size:8.7px;line-height:8.7px;color:#505050;letter-spacing:-0.469px;">0,00 %</div>
<div class="t" style="left:739.6px;top:592.8px;font-size:14px;line-height:12px;color:#84cbe9;font-family:'Liberation Serif',serif;width:8px;text-align:center;transform:scaleX(.8);-webkit-text-stroke:0.2px #84cbe9">i</div>
<div class="t " style="left:804.90px;top:596.14px;font-size:8.7px;line-height:8.7px;color:#505050;letter-spacing:-0.469px;">0,00 %</div>
<div class="t" style="left:828.6px;top:592.8px;font-size:14px;line-height:12px;color:#84cbe9;font-family:'Liberation Serif',serif;width:8px;text-align:center;transform:scaleX(.8);-webkit-text-stroke:0.2px #84cbe9">i</div>
<div class="t " style="left:896.20px;top:596.14px;font-size:8.7px;line-height:8.7px;color:#505050;letter-spacing:-0.469px;">0,00 %</div>
<div class="t" style="left:919.9px;top:592.8px;font-size:14px;line-height:12px;color:#84cbe9;font-family:'Liberation Serif',serif;width:8px;text-align:center;transform:scaleX(.8);-webkit-text-stroke:0.2px #84cbe9">i</div>
<div class="t " style="left:975.34px;top:596.14px;font-size:8.7px;line-height:8.7px;color:#505050;">19.313,01</div>
<div class="t" style="left:1013.0px;top:592.8px;font-size:14px;line-height:12px;color:#84cbe9;font-family:'Liberation Serif',serif;width:8px;text-align:center;transform:scaleX(.8);-webkit-text-stroke:0.2px #84cbe9">i</div>
</div>
<div class="card" style="left:1031px;top:432px;width:500px;height:320px"></div>
<svg style="left:1497.5px;top:438.2px" width="12" height="12" viewBox="0 0 12 12"><rect x="0.0" y="0.3" width="3" height="3" fill="#1493d6"/><rect x="3.9" y="0.3" width="3" height="3" fill="#bfe3fa"/><rect x="7.8" y="0.3" width="3" height="3" fill="#7cc6f4"/><rect x="0.0" y="4.2" width="3" height="3" fill="#1493d6"/><rect x="3.9" y="4.2" width="3" height="3" fill="#1493d6"/><rect x="7.8" y="4.2" width="3" height="3" fill="#7cc6f4"/><rect x="0.0" y="8.1" width="3" height="3" fill="#1493d6"/><rect x="3.9" y="8.1" width="3" height="3" fill="#1493d6"/><rect x="7.8" y="8.1" width="3" height="3" fill="#1493d6"/></svg>
<svg style="left:1032px;top:480px" width="122" height="85" viewBox="1032 480 122 85"><path d="M1089.6 492.6 A9.6 9.6 0 1 0 1089.6 505.8" fill="none" stroke="#1ea0d8" stroke-width="3.6"/><circle cx="1103.4" cy="499.2" r="11.1" fill="none" stroke="#1ea0d8" stroke-width="1.5"/><path d="M1033 544H1152.7" stroke="#d3ebf7" stroke-width="1.2"/></svg>
<div class="t " style="left:1050.30px;top:522.10px;font-size:13px;line-height:13px;color:#44aadd;letter-spacing:4.263px;">PLANNER</div>
<div class="t " style="left:1040.80px;top:553.86px;font-size:5.6px;line-height:5.6px;color:#58b4e2;font-weight:bold;letter-spacing:0.746px;">INTELLIGENTES CONTROLLING</div>
<div class="t " style="left:1442.10px;top:463.62px;font-size:8.6px;line-height:8.6px;color:#3d9fd8;letter-spacing:0.300px;">Anmelden</div>
<div class="abs" style="left:1155px;top:489.5px;width:346px;height:1px;background:#aaa"></div>
<div class="abs" style="left:1155px;top:489.5px;width:1px;height:240px;background:#aaa"></div>
<div class="abs" style="left:1166.7px;top:476.3px;width:60.7px;height:14.4px;background:#fff;border:1px solid #f3c56a;border-bottom:none;box-sizing:border-box;border-left-color:#e9d6a8;border-right-color:#e9d6a8;border-top:1.5px solid #f5c264"></div>
<div class="t " style="left:1174.80px;top:479.37px;font-size:8.3px;line-height:8.3px;color:#3d9fd8;font-weight:bold;letter-spacing:0.231px;">Hauptseite</div>
<div class="abs" style="left:1232.0px;top:476.8px;width:60.6px;height:12.8px;background:#fff;border:1px solid #b9b9b9;border-bottom:none;box-sizing:border-box"></div>
<div class="t " style="left:1240.80px;top:479.37px;font-size:8.3px;line-height:8.3px;color:#3d9fd8;letter-spacing:0.319px;">Diskussion</div>
<div class="abs" style="left:1307.1px;top:476.8px;width:91.5px;height:12.8px;background:#fff;border:1px solid #b9b9b9;border-bottom:none;box-sizing:border-box"></div>
<div class="t " style="left:1315.35px;top:479.37px;font-size:8.3px;line-height:8.3px;color:#3d9fd8;letter-spacing:0.369px;">Quelltext anzeigen</div>
<div class="abs" style="left:1403.2px;top:476.8px;width:96.3px;height:12.8px;background:#fff;border:1px solid #b9b9b9;border-bottom:none;box-sizing:border-box"></div>
<div class="t " style="left:1411.35px;top:479.37px;font-size:8.3px;line-height:8.3px;color:#3d9fd8;letter-spacing:0.500px;">Versionsgeschichte</div>
<div class="t " style="left:1166.70px;top:506.52px;font-size:19px;line-height:19px;color:#222;letter-spacing:-0.117px;">CoPlanner-Portal</div>
<div class="abs" style="left:1166.7px;top:526.5px;width:324.5px;height:1px;background:#b8bcc0"></div>
<div class="t " style="left:1166.70px;top:562.43px;font-size:10px;line-height:10px;color:#222;letter-spacing:0.047px;">Dieses Portal bietet Ihnen Neuigkeiten, Informationen und</div>
<div class="t " style="left:1166.70px;top:577.63px;font-size:10px;line-height:10px;color:#222;letter-spacing:0.027px;">Hilfestellungen rundum die Software von CoPlanner. Damit Sie einen</div>
<div class="t " style="left:1166.70px;top:592.83px;font-size:10px;line-height:10px;color:#222;letter-spacing:0.012px;">sicheren Einstieg haben und die Vorteile von der CoPlanner-Software</div>
<div class="t " style="left:1166.70px;top:608.03px;font-size:10px;line-height:10px;color:#222;letter-spacing:0.070px;">optimal nutzen können, wird das Online-Hilfesystem kontinuierlich</div>
<div class="t " style="left:1166.70px;top:623.23px;font-size:10px;line-height:10px;color:#222;letter-spacing:0.030px;">aktualisiert. Sie haben noch Fragen oder Verbesserungsvorschläge zu</div>
<div class="t " style="left:1166.70px;top:638.43px;font-size:10px;line-height:10px;color:#222;letter-spacing:0.021px;">diesem Portal? Zögern Sie nicht uns diese zu schicken, wir freuen uns</div>
<div class="t " style="left:1166.70px;top:653.63px;font-size:10px;line-height:10px;color:#222;letter-spacing:0.004px;">über Ihr</div>
<div class="t " style="left:1203.60px;top:653.63px;font-size:10px;line-height:10px;color:#3d9fd8;letter-spacing:-0.069px;">E-Mail</div>
<svg style="left:1232.5px;top:655.9px" width="9" height="7" viewBox="0 0 9 7"><rect x="0.6" y="0.6" width="7.6" height="5.4" fill="none" stroke="#2a6fb5" stroke-width="1.1"/><path d="M1 1L4.4 4L7.8 1" fill="none" stroke="#2a6fb5" stroke-width="1"/></svg>
<div class="t " style="left:1241.80px;top:653.63px;font-size:10px;line-height:10px;color:#222;">.</div>
<div class="abs" style="left:1166.7px;top:691.5px;width:324.5px;height:60px;border:2px solid #35a9db;box-sizing:border-box"></div>
<div class="t " style="left:1173.50px;top:700.53px;font-size:10px;line-height:10px;color:#3d9fd8;letter-spacing:-0.086px;">Hinweis</div>
<div class="t " style="left:1213.20px;top:700.53px;font-size:10px;line-height:10px;color:#222;letter-spacing:-0.028px;">Sie verwenden noch die CoPlanner Version 10? Das</div>
<div class="t " style="left:1173.50px;top:715.74px;font-size:10px;line-height:10px;color:#222;letter-spacing:0.006px;">CoPlanner-Portal für diese Version finden Sie</div>
<div class="t " style="left:1377.90px;top:715.74px;font-size:10px;line-height:10px;color:#3d9fd8;letter-spacing:0.171px;">hier</div>
<svg style="left:1396px;top:716px" width="9" height="9" viewBox="0 0 9 9"><path d="M3 2.6H1V8H6.4V6" fill="none" stroke="#2a6fb5" stroke-width="1"/><rect x="3.6" y="0.6" width="4.8" height="4.8" fill="none" stroke="#2a6fb5" stroke-width="1"/></svg>
<div class="t " style="left:1036.60px;top:590.93px;font-size:9.3px;line-height:9.3px;color:#222;letter-spacing:-0.026px;">Navigation</div>
<div class="abs" style="left:1031.7px;top:600.8px;width:117px;height:80px;border:1px solid #aaa;box-sizing:border-box;background:#fff"></div>
<div class="abs" style="left:1042.4px;top:609.7px;width:3.6px;height:3.6px;background:#4d6f86"></div>
<div class="t " style="left:1052.20px;top:607.85px;font-size:8.8px;line-height:8.8px;color:#3d9fd8;letter-spacing:0.182px;">Hauptseite</div>
<div class="abs" style="left:1042.4px;top:624.2px;width:3.6px;height:3.6px;background:#4d6f86"></div>
<div class="t " style="left:1052.20px;top:622.35px;font-size:8.8px;line-height:8.8px;color:#3d9fd8;letter-spacing:0.115px;">Letzte Änderungen</div>
<div class="abs" style="left:1042.4px;top:638.7px;width:3.6px;height:3.6px;background:#4d6f86"></div>
<div class="t " style="left:1052.20px;top:636.85px;font-size:8.8px;line-height:8.8px;color:#3d9fd8;letter-spacing:0.132px;">Zufällige Seite</div>
<div class="abs" style="left:1042.4px;top:653.2px;width:3.6px;height:3.6px;background:#4d6f86"></div>
<div class="t " style="left:1052.20px;top:651.35px;font-size:8.8px;line-height:8.8px;color:#3d9fd8;letter-spacing:0.248px;">Hilfe</div>
<div class="abs" style="left:1042.4px;top:667.7px;width:3.6px;height:3.6px;background:#4d6f86"></div>
<div class="t " style="left:1052.20px;top:665.85px;font-size:8.8px;line-height:8.8px;color:#3d9fd8;letter-spacing:0.064px;">Alle Seiten</div>
<div class="t " style="left:1036.60px;top:687.73px;font-size:9.3px;line-height:9.3px;color:#222;letter-spacing:0.019px;">Hilfethemen</div>
<div class="abs" style="left:1031.7px;top:698.2px;width:117px;height:80px;border:1px solid #aaa;box-sizing:border-box;background:#fff"></div>
<div class="abs" style="left:1042.4px;top:706.8px;width:3.6px;height:3.6px;background:#4d6f86"></div>
<div class="t " style="left:1052.20px;top:704.95px;font-size:8.8px;line-height:8.8px;color:#3d9fd8;letter-spacing:0.281px;">Administration</div>
<div class="abs" style="left:1042.4px;top:721.3px;width:3.6px;height:3.6px;background:#4d6f86"></div>
<div class="t " style="left:1052.20px;top:719.45px;font-size:8.8px;line-height:8.8px;color:#3d9fd8;letter-spacing:-0.049px;">Analyse</div>
<div class="abs" style="left:1501px;top:461px;width:11px;height:263px;background:#f1f1f1"></div>
<div class="abs" style="left:1503px;top:474.5px;width:9px;height:81px;background:#c1c1c1"></div>
<svg style="left:1503.5px;top:465.5px" width="7" height="5" viewBox="0 0 7 5"><path d="M0.4 4.2L3.5 0.8L6.6 4.2Z" fill="#a3a3a3"/></svg>
</div>
</body></html>
